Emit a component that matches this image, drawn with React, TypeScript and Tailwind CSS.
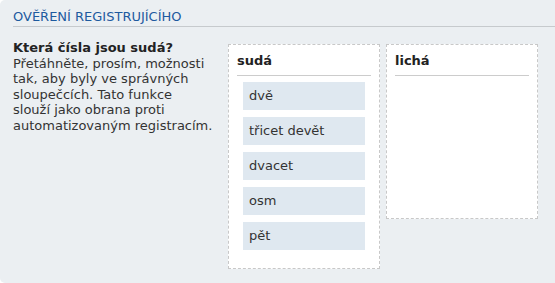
import React from "react";

const items = ["dvě", "třicet devět", "dvacet", "osm", "pět"];

export default function App() {
  return (
    <div className="w-[555px] h-[283px] bg-[#ebeff2] rounded-l-[5px] overflow-hidden font-['DejaVu_Sans',Verdana,sans-serif] text-[#333333]">
      <div className="pl-[13px] pt-[9px]">
        <div className="border-b border-[#c6cacd] pb-[2px] text-[13px] leading-[15px] text-[#1d5a9f]">
          OVĚŘENÍ REGISTRUJÍCÍHO
        </div>
      </div>
      <div className="flex pl-[13px] pt-[13px]">
        <div className="w-[215px] pr-[4px] text-[13px] leading-[15.5px] whitespace-nowrap">
          <div className="font-bold text-[#222222]">Která čísla jsou sudá?</div>
          <div>
            Přetáhněte, prosím, možnosti
            <br />
            tak, aby byly ve správných
            <br />
            sloupečcích. Tato funkce
            <br />
            slouží jako obrana proti
            <br />
            automatizovaným registracím.
          </div>
        </div>
        <div className="mt-[4px] flex items-start gap-[6px]">
          <div className="w-[152px] h-[225px] border border-dashed border-[#c8c8c8] bg-white px-[8px] pt-[8px]">
            <div className="border-b border-[#cccccc] pb-[7px] text-[13px] leading-[15px] font-bold text-[#222222]">
              sudá
            </div>
            <div className="flex flex-col gap-[7px] px-[6px] pt-[6px]">
              {items.map((t) => (
                <div key={t} className="h-[28px] bg-[#dfe8f0] px-[6px] text-[13px] leading-[28px] text-[#333333]">
                  {t}
                </div>
              ))}
            </div>
          </div>
          <div className="w-[152px] h-[175px] border border-dashed border-[#c8c8c8] bg-white px-[8px] pt-[8px]">
            <div className="border-b border-[#cccccc] pb-[7px] text-[13px] leading-[15px] font-bold text-[#222222]">
              lichá
            </div>
          </div>
        </div>
      </div>
    </div>
  );
}
